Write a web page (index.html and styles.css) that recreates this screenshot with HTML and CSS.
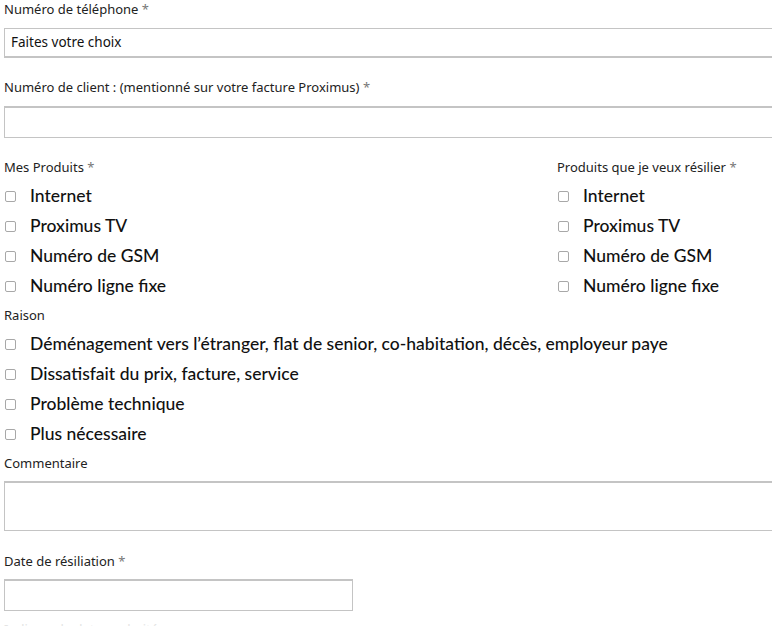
FILE: index.html
```html
<!DOCTYPE html>
<html lang="fr">
<head>
<meta charset="utf-8">
<link rel="stylesheet" href="styles.css">
</head>
<body>
<form class="form">
  <div class="field first">
    <div class="label">Numéro de téléphone <span class="req">*</span></div>
    <div class="select">Faites votre choix</div>
  </div>
  <div class="field gap">
    <div class="label">Numéro de client : (mentionné sur votre facture Proximus) <span class="req">*</span></div>
    <div class="input"></div>
  </div>
  <div class="cols">
    <div class="col">
      <div class="label">Mes Produits <span class="req">*</span></div>
      <div class="checks">
        <div class="check"><span class="box"></span><span>Internet</span></div>
        <div class="check"><span class="box"></span><span>Proximus TV</span></div>
        <div class="check"><span class="box"></span><span>Numéro de GSM</span></div>
        <div class="check"><span class="box"></span><span>Numéro ligne fixe</span></div>
      </div>
    </div>
    <div class="col">
      <div class="label">Produits que je veux résilier <span class="req">*</span></div>
      <div class="checks">
        <div class="check"><span class="box"></span><span>Internet</span></div>
        <div class="check"><span class="box"></span><span>Proximus TV</span></div>
        <div class="check"><span class="box"></span><span>Numéro de GSM</span></div>
        <div class="check"><span class="box"></span><span>Numéro ligne fixe</span></div>
      </div>
    </div>
  </div>
  <div class="group">
    <div class="label">Raison</div>
    <div class="checks">
      <div class="check"><span class="box"></span><span>Déménagement vers l’étranger, flat de senior, co-habitation, décès, employeur paye</span></div>
      <div class="check"><span class="box"></span><span>Dissatisfait du prix, facture, service</span></div>
      <div class="check"><span class="box"></span><span>Problème technique</span></div>
      <div class="check"><span class="box"></span><span>Plus nécessaire</span></div>
    </div>
  </div>
  <div class="field comment">
    <div class="label">Commentaire</div>
    <div class="textarea"></div>
  </div>
  <div class="field gap date">
    <div class="label">Date de résiliation <span class="req">*</span></div>
    <div class="input short"></div>
  </div>
  <div class="hint">Indiquez la date souhaitée</div>
</form>
</body>
</html>
```
FILE: styles.css
```css
html, body {
  margin: 0;
  padding: 0;
  overflow: hidden;
  background: #fff;
}
body {
  font-family: Lato, "Noto Sans", sans-serif;
  color: #1a1a1a;
}
.form {
  width: 1120px;
  padding: 0 0 0 4px;
  display: flex;
  flex-direction: column;
}
.label {
  font-family: "Noto Sans", sans-serif;
  font-size: 13px;
  line-height: 18px;
  color: #222;
}
.req {
  color: #777;
}
.field {
  display: flex;
  flex-direction: column;
}
.select {
  margin-top: 10px;
  height: 27px;
  border: 1px solid #c4c4c4;
  border-bottom-width: 2px;
  font-family: "Noto Sans", sans-serif;
  font-size: 13.5px;
  line-height: 27px;
  padding-left: 6px;
  color: #111;
}
.gap { margin-top: 20px; }
.input {
  margin-top: 10px;
  height: 29px;
  border: 1px solid #c4c4c4;
  border-top-width: 2px;
}
.cols {
  margin-top: 20px;
  display: grid;
  grid-template-columns: 553px 553px;
}
.checks {
  display: flex;
  flex-direction: column;
  margin-top: 4px;
}
.check {
  height: 30px;
  display: flex;
  align-items: center;
  font-size: 17.5px;
  font-weight: 500;
  color: #111;
}
.box {
  width: 9px;
  height: 9px;
  border: 1px solid #a8a8a8;
  border-radius: 2px;
  margin: 2px 14px 0 1px;
  flex: none;
}
.group {
  margin-top: 6px;
}
.textarea {
  margin-top: 9px;
  height: 47px;
  border: 1px solid #c4c4c4;
  border-top-width: 2px;
}
.comment { margin-top: 6px; }
.date { margin-top: 21px; }
.date .input { margin-top: 9px; }
.input.short {
  width: 347px;
}
.hint {
  margin-top: 9px;
  font-family: "Noto Sans", sans-serif;
  font-size: 13px;
  line-height: 18px;
  color: #e4e4e4;
}
```
